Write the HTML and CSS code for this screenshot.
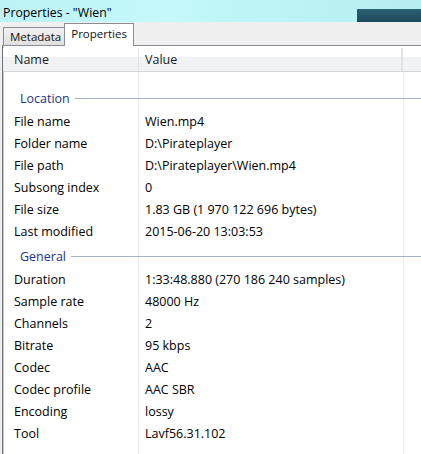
FILE: index.html
```html
<!DOCTYPE html>
<html>
<head>
<meta charset="utf-8">
<link rel="stylesheet" href="styles.css">
</head>
<body>
<div class="window">
  <div class="titlebar">
    <div class="title">Properties - "Wien"</div>
    <div class="dark-block"></div>
  </div>
  <div class="dialog">
    <div class="tabs">
      <div class="tab">Metadata</div>
      <div class="tab active">Properties</div>
    </div>
    <div class="panel">
      <div class="list-header">
        <div class="hcol name">Name</div>
        <div class="hcol value">Value</div>
        <div class="hcol extra"></div>
      </div>
      <div class="list-body">
        <div class="spacer"></div>
        <div class="group"><span class="glabel">Location</span><span class="gline"></span></div>
        <div class="row"><span class="c1">File name</span><span class="c2">Wien.mp4</span></div>
        <div class="row"><span class="c1">Folder name</span><span class="c2">D:\Pirateplayer</span></div>
        <div class="row"><span class="c1">File path</span><span class="c2">D:\Pirateplayer\Wien.mp4</span></div>
        <div class="row"><span class="c1">Subsong index</span><span class="c2">0</span></div>
        <div class="row"><span class="c1">File size</span><span class="c2">1.83 GB (1 970 122 696 bytes)</span></div>
        <div class="row"><span class="c1">Last modified</span><span class="c2">2015-06-20 13:03:53</span></div>
        <div class="group"><span class="glabel">General</span><span class="gline"></span></div>
        <div class="row"><span class="c1">Duration</span><span class="c2">1:33:48.880 (270 186 240 samples)</span></div>
        <div class="row"><span class="c1">Sample rate</span><span class="c2">48000 Hz</span></div>
        <div class="row"><span class="c1">Channels</span><span class="c2">2</span></div>
        <div class="row"><span class="c1">Bitrate</span><span class="c2">95 kbps</span></div>
        <div class="row"><span class="c1">Codec</span><span class="c2">AAC</span></div>
        <div class="row"><span class="c1">Codec profile</span><span class="c2">AAC SBR</span></div>
        <div class="row"><span class="c1">Encoding</span><span class="c2">lossy</span></div>
        <div class="row"><span class="c1">Tool</span><span class="c2">Lavf56.31.102</span></div>
      </div>
    </div>
  </div>
</div>
</body>
</html>
```
FILE: styles.css
```css
html, body {
  margin: 0;
  padding: 0;
}
body {
  width: 421px;
  height: 454px;
  overflow: hidden;
  font-family: "Open Sans", "Noto Sans", sans-serif;
  font-size: 12.5px;
  color: #000;
}
.window {
  display: flex;
  flex-direction: column;
  height: 454px;
}
.titlebar {
  height: 22px;
  display: flex;
  align-items: stretch;
  background: linear-gradient(90deg, #bdf3f6 0%, #c4f8f9 40%, #b5eef1 100%);
}
.title {
  flex: 1;
  padding-left: 3px;
  padding-top: 4px;
  font-size: 12.3px;
  line-height: 18px;
  color: #000;
}
.dark-block {
  width: 64px;
  margin-top: 9px;
  background: linear-gradient(180deg, #2c6173 0%, #1d4a5a 100%);
}
.dialog {
  flex: 1;
  display: flex;
  flex-direction: column;
  background: #f0f0f0;
  padding-left: 2px;
}
.tabs {
  display: flex;
  align-items: flex-end;
  height: 23px;
  padding-left: 1px;
  font-size: 11.5px;
}
.tab {
  height: 17px;
  line-height: 18px;
  padding: 0 3px 0 6px;
  border: 1px solid #898c95;
  border-bottom: none;
  background: linear-gradient(180deg, #f2f2f2 0%, #e0e0e0 100%);
  color: #111;
}
.tab.active {
  height: 22px;
  line-height: 19px;
  padding: 0 6px 0 6px;
  background: #fff;
  margin-left: -1px;
  margin-bottom: -1px;
  position: relative;
  z-index: 1;
}
.panel {
  flex: 1;
  background: #fff;
  border-top: 1px solid #898c95;
  border-left: 1px solid #6e7177;
  box-shadow: inset 1px 0 0 #c9c9c9;
  display: flex;
  flex-direction: column;
  padding-top: 2px;
}
.list-header {
  height: 23px;
  display: flex;
  background: linear-gradient(180deg, #ffffff 0%, #ffffff 40%, #f1f2f4 41%, #f1f2f4 100%);
  border-bottom: 1px solid #d5d5d5;
}
.hcol {
  line-height: 23px;
  color: #1c1c1c;
}
.hcol.name {
  width: 124px;
  padding-left: 11px;
  border-right: 1px solid #e3e5e8;
}
.hcol.value {
  width: 256px;
  padding-left: 6px;
  border-right: 2px solid #e0e2e5;
}
.hcol.extra {
  flex: 1;
}
.list-body {
  flex: 1;
  background:
    linear-gradient(90deg, transparent 135px, #eaf1f8 135px, #eaf1f8 136px, transparent 136px, transparent 400px, #eaf1f8 400px, #eaf1f8 401px, transparent 401px);
}
.spacer {
  height: 13px;
}
.group {
  height: 26px;
  display: flex;
  align-items: center;
  padding-left: 17px;
}
.glabel {
  color: #1e3287;
  padding-right: 5px;
}
.gline {
  flex: 1;
  height: 1px;
  background: #a7b4c6;
}
.row {
  height: 22px;
  line-height: 22px;
  display: flex;
}
.c1 {
  width: 131px;
  padding-left: 11px;
  white-space: nowrap;
}
.c2 {
  white-space: nowrap;
}
```
